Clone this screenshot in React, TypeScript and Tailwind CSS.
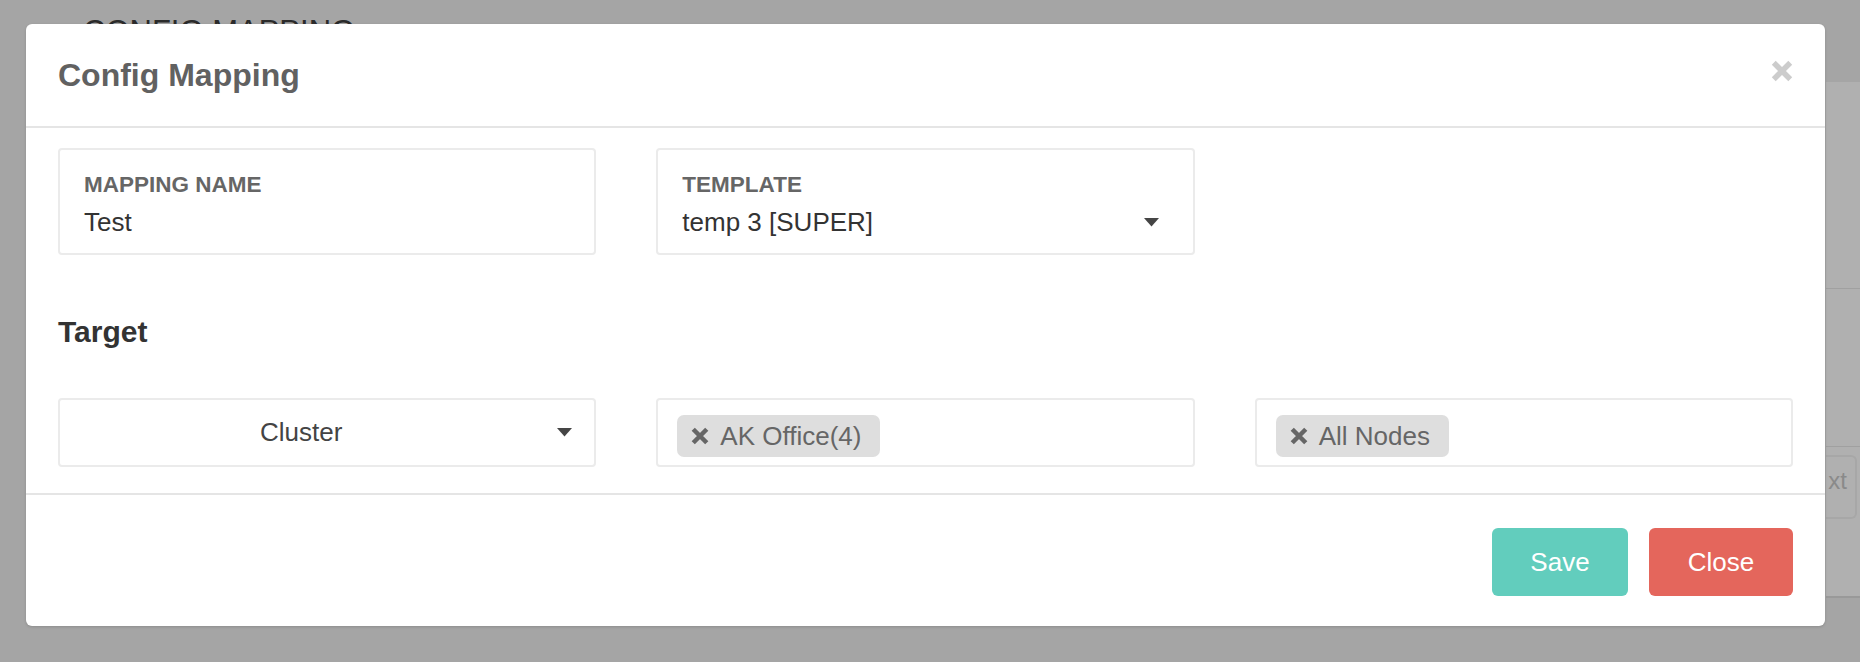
const font = { fontFamily: '"Liberation Sans", Arial, sans-serif' };

function Caret() {
  return (
    <svg width="15" height="9" viewBox="0 0 15 9" className="shrink-0">
      <path d="M0 0 H15 L7.5 8.5 Z" fill="#454545" />
    </svg>
  );
}

function TimesIcon({ size = 15, color = '#666666', stroke = 4 }: { size?: number; color?: string; stroke?: number }) {
  return (
    <svg width={size} height={size} viewBox="0 0 20 20" className="shrink-0">
      <path d="M2.5 2.5 L17.5 17.5 M17.5 2.5 L2.5 17.5" stroke={color} strokeWidth={stroke} strokeLinecap="butt" />
    </svg>
  );
}

function Tag({ label }: { label: string }) {
  return (
    <span className="inline-flex items-center h-[42px] pl-[14px] pr-[19px] gap-[11px] rounded-[7px] bg-[#dedede] text-[26px] text-[#666666] leading-none">
      <TimesIcon size={18} stroke={5} />
      {label}
    </span>
  );
}

function FieldBox({ label, value, select }: { label: string; value: string; select?: boolean }) {
  return (
    <div className="h-[107px] border-2 border-[#ebebeb] rounded-[4px] pl-[24px] pr-[34px] pt-[22px] flex flex-col">
      <span className="text-[22.5px] font-bold text-[#666666] leading-[26px] uppercase">{label}</span>
      <div className="flex items-center justify-between mt-[8px]">
        <span className="text-[26px] text-[#333333] leading-[32px]">{value}</span>
        {select && <Caret />}
      </div>
    </div>
  );
}

export default function App() {
  return (
    <div className="relative w-full h-[662px] overflow-hidden bg-[#a5a5a5]" style={font}>
      {/* page behind the backdrop */}
      <div className="flex flex-col h-full">
        <div className="pl-[83px] pt-[16px] text-[31px] leading-none text-[#2b2b2b]">CONFIG MAPPING</div>
        <div className="flex justify-end mt-[35px]">
          <div className="w-[34px] h-[516px] bg-[#b0b0b0] border-b-2 border-[#999999] flex flex-col">
            <div className="h-[207px] border-b border-[#a0a0a0]" />
            <div className="h-[158px] border-b border-[#a0a0a0]" />
            <div className="mt-[8px] h-[64px] w-[31px] rounded-r-[6px] border-2 border-l-0 border-[#a7a7a7] flex items-start justify-end pr-[8px] pt-[12px] text-[24px] text-[#8a8a8a] leading-none overflow-hidden">
              xt
            </div>
          </div>
        </div>
      </div>

      {/* modal */}
      <div className="absolute left-[26px] top-[24px] w-[1799px] h-[602px] bg-white rounded-[6px] shadow-[0_1px_3px_rgba(0,0,0,0.15)] flex flex-col">
        <div className="h-[104px] border-b-2 border-[#e5e5e5] flex items-center justify-between pl-[32px] pr-[32px]">
          <h4 className="text-[32px] font-bold text-[#616161] leading-none">Config Mapping</h4>
          <button className="-mt-[8px]">
            <TimesIcon size={22} color="#cccccc" stroke={5} />
          </button>
        </div>

        <div className="px-[32px] pt-[20px] pb-[26px] border-b-2 border-[#e5e5e5]">
          <div className="grid grid-cols-3 gap-x-[60px]">
            <FieldBox label="Mapping Name" value="Test" />
            <FieldBox label="Template" value="temp 3 [SUPER]" select />
          </div>

          <h3 className="text-[30px] font-bold text-[#333333] leading-none mt-[62px] mb-[51px]">Target</h3>

          <div className="grid grid-cols-3 gap-x-[60px]">
            <div className="relative h-[69px] border-2 border-[#ebebeb] rounded-[4px] flex items-center justify-center pr-[52px]">
              <span className="text-[26px] text-[#444444]">Cluster</span>
              <span className="absolute right-[22px] top-[28px]">
                <Caret />
              </span>
            </div>
            <div className="h-[69px] border-2 border-[#ebebeb] rounded-[4px] flex items-start pl-[19px] pt-[15px]">
              <Tag label="AK Office(4)" />
            </div>
            <div className="h-[69px] border-2 border-[#ebebeb] rounded-[4px] flex items-start pl-[19px] pt-[15px]">
              <Tag label="All Nodes" />
            </div>
          </div>
        </div>

        <div className="flex justify-end gap-[21px] px-[32px] pt-[33px]">
          <button className="h-[68px] w-[136px] rounded-[6px] bg-[#62cdbd] text-white text-[26px]">Save</button>
          <button className="h-[68px] w-[144px] rounded-[6px] bg-[#e4665c] text-white text-[26px]">Close</button>
        </div>
      </div>
    </div>
  );
}
